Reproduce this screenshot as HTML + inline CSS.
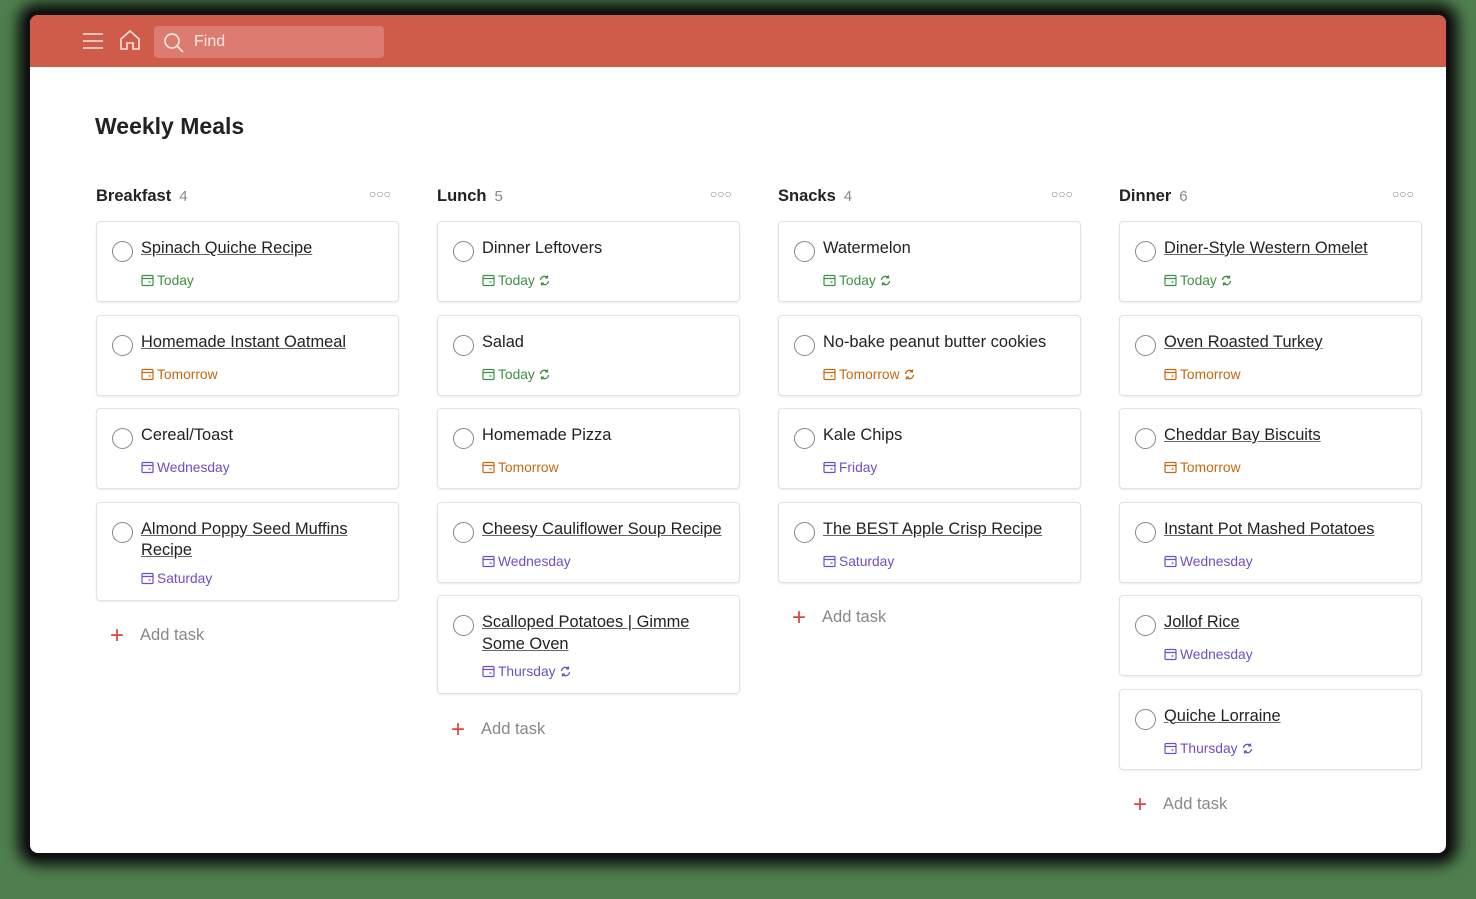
<!DOCTYPE html>
<html><head><meta charset="utf-8"><style>
*{box-sizing:border-box;margin:0;padding:0}
html,body{width:1476px;height:899px;overflow:hidden;background:#4f7f4f;font-family:"Liberation Sans",sans-serif}
.win{position:absolute;left:30px;top:15px;width:1416px;height:838px;background:#fff;border-radius:8px;box-shadow:0 0 0 4px #111,0 0 14px 12px #0c0c0c;overflow:hidden}
.hdr{position:absolute;left:0;top:0;width:100%;height:52px;background:#cf5b4b}
.find{position:absolute;left:124px;top:11px;width:230px;height:32px;background:#dc7b6f;border-radius:4px;color:#fbe9e6;font-size:16px;line-height:32px;padding-left:40px}
h1{position:absolute;left:65px;top:98px;font-size:23px;font-weight:bold;color:#222}
.col{position:absolute;top:0;width:303px}
.ch{position:absolute;top:172px;left:0;font-size:16.5px;font-weight:bold;color:#222;white-space:nowrap}
.ch span{font-weight:normal;color:#888;margin-left:8px;font-size:15px}
.dots{position:absolute;top:172px;left:273px;font-size:12px;color:#888}
.card{position:absolute;left:0;width:303px;background:#fff;border:1px solid #e2e2e2;border-radius:4px;box-shadow:0 1px 2px rgba(0,0,0,.08)}
.circ{position:absolute;left:15px;top:19px;width:21px;height:21px;border:1px solid #888;border-radius:50%}
.t{position:absolute;left:44px;top:16px;width:245px;font-size:16.4px;line-height:21.5px;color:#222}
.u{text-decoration:underline;text-decoration-color:#666}
.d{position:absolute;left:44px;font-size:13.8px;display:flex;align-items:center;gap:3px}
.d svg{width:13px;height:13px}
.g{color:#3f9142}.o{color:#c46a12}.p{color:#6e4fc4}
.add{position:absolute;left:14px;font-size:16.5px;color:#888}
.add b{color:#d44;font-weight:normal;font-size:24px;position:relative;top:3px;margin-right:16px}
</style></head><body>
<div class="win">
<div class="hdr">
<svg style="position:absolute;left:52px;top:17px" width="22" height="18" viewBox="0 0 22 18" stroke="#fbe4e0" stroke-width="1.6" fill="none"><path d="M1 2h20M1 9h20M1 16h20"/></svg>
<svg style="position:absolute;left:89px;top:14px" width="22" height="22" viewBox="0 0 22 22" stroke="#fbe4e0" stroke-width="1.6" fill="none"><path d="M2 10 11 2l9 8v10h-6v-6h-6v6H2z"/></svg>
<div class="find">Find</div>
<svg style="position:absolute;left:133px;top:17px" width="22" height="22" viewBox="0 0 22 22" stroke="#fbe4e0" stroke-width="1.7" fill="none"><circle cx="9" cy="9" r="7"/><path d="M14 14l6 6"/></svg>
</div>
<h1>Weekly Meals</h1>
<div id="cols"></div>
</div>
<script>
const cal='<svg viewBox="0 0 13 13" fill="none" stroke="currentColor" stroke-width="1.2"><rect x="1" y="1.5" width="11" height="10" rx="1"/><path d="M1 4.5h11M7.5 8h2"/></svg>';
const rep='<svg viewBox="0 0 13 13" fill="none" stroke="currentColor" stroke-width="1.3"><path d="M2.5 6a4 4 0 0 1 7-2.3M10.5 7a4 4 0 0 1-7 2.3M9.5 1.5v2.4H7.1M3.5 11.5V9.1h2.4"/></svg>';
const C={Today:'g',Tomorrow:'o'};
const data=[
["Breakfast",4,[["Spinach Quiche Recipe",1,"Today",0],["Homemade Instant Oatmeal",1,"Tomorrow",0],["Cereal/Toast",0,"Wednesday",0],["Almond Poppy Seed Muffins Recipe",1,"Saturday",0,2]]],
["Lunch",5,[["Dinner Leftovers",0,"Today",1],["Salad",0,"Today",1],["Homemade Pizza",0,"Tomorrow",0],["Cheesy Cauliflower Soup Recipe",1,"Wednesday",0],["Scalloped Potatoes | Gimme Some Oven",1,"Thursday",1,2]]],
["Snacks",4,[["Watermelon",0,"Today",1],["No-bake peanut butter cookies",0,"Tomorrow",1],["Kale Chips",0,"Friday",0],["The BEST Apple Crisp Recipe",1,"Saturday",0]]],
["Dinner",6,[["Diner-Style Western Omelet",1,"Today",1],["Oven Roasted Turkey",1,"Tomorrow",0],["Cheddar Bay Biscuits",1,"Tomorrow",0],["Instant Pot Mashed Potatoes",1,"Wednesday",0],["Jollof Rice",1,"Wednesday",0],["Quiche Lorraine",1,"Thursday",1]]]];
let h='';
data.forEach((c,i)=>{
 h+=`<div class="col" style="left:${66+i*341}px"><div class="ch">${c[0]}<span>${c[1]}</span></div><div class="dots">○○○</div>`;
 let y=206;
 c[2].forEach(t=>{
  const two=t[4]==2, ht=two?99:81;
  h+=`<div class="card" style="top:${y}px;height:${ht}px"><div class="circ"></div><div class="t"><span class="${t[1]?'u':''}">${t[0]}</span></div><div class="d ${C[t[2]]||'p'}" style="top:${two?68:51}px">${cal}${t[2]}${t[3]?rep:''}</div></div>`;
  y+=ht+12.5;
 });
 h+=`<div class="add" style="top:${y+6}px"><b>+</b>Add task</div></div>`;
});
document.getElementById('cols').innerHTML=h;
</script>
</body></html>
